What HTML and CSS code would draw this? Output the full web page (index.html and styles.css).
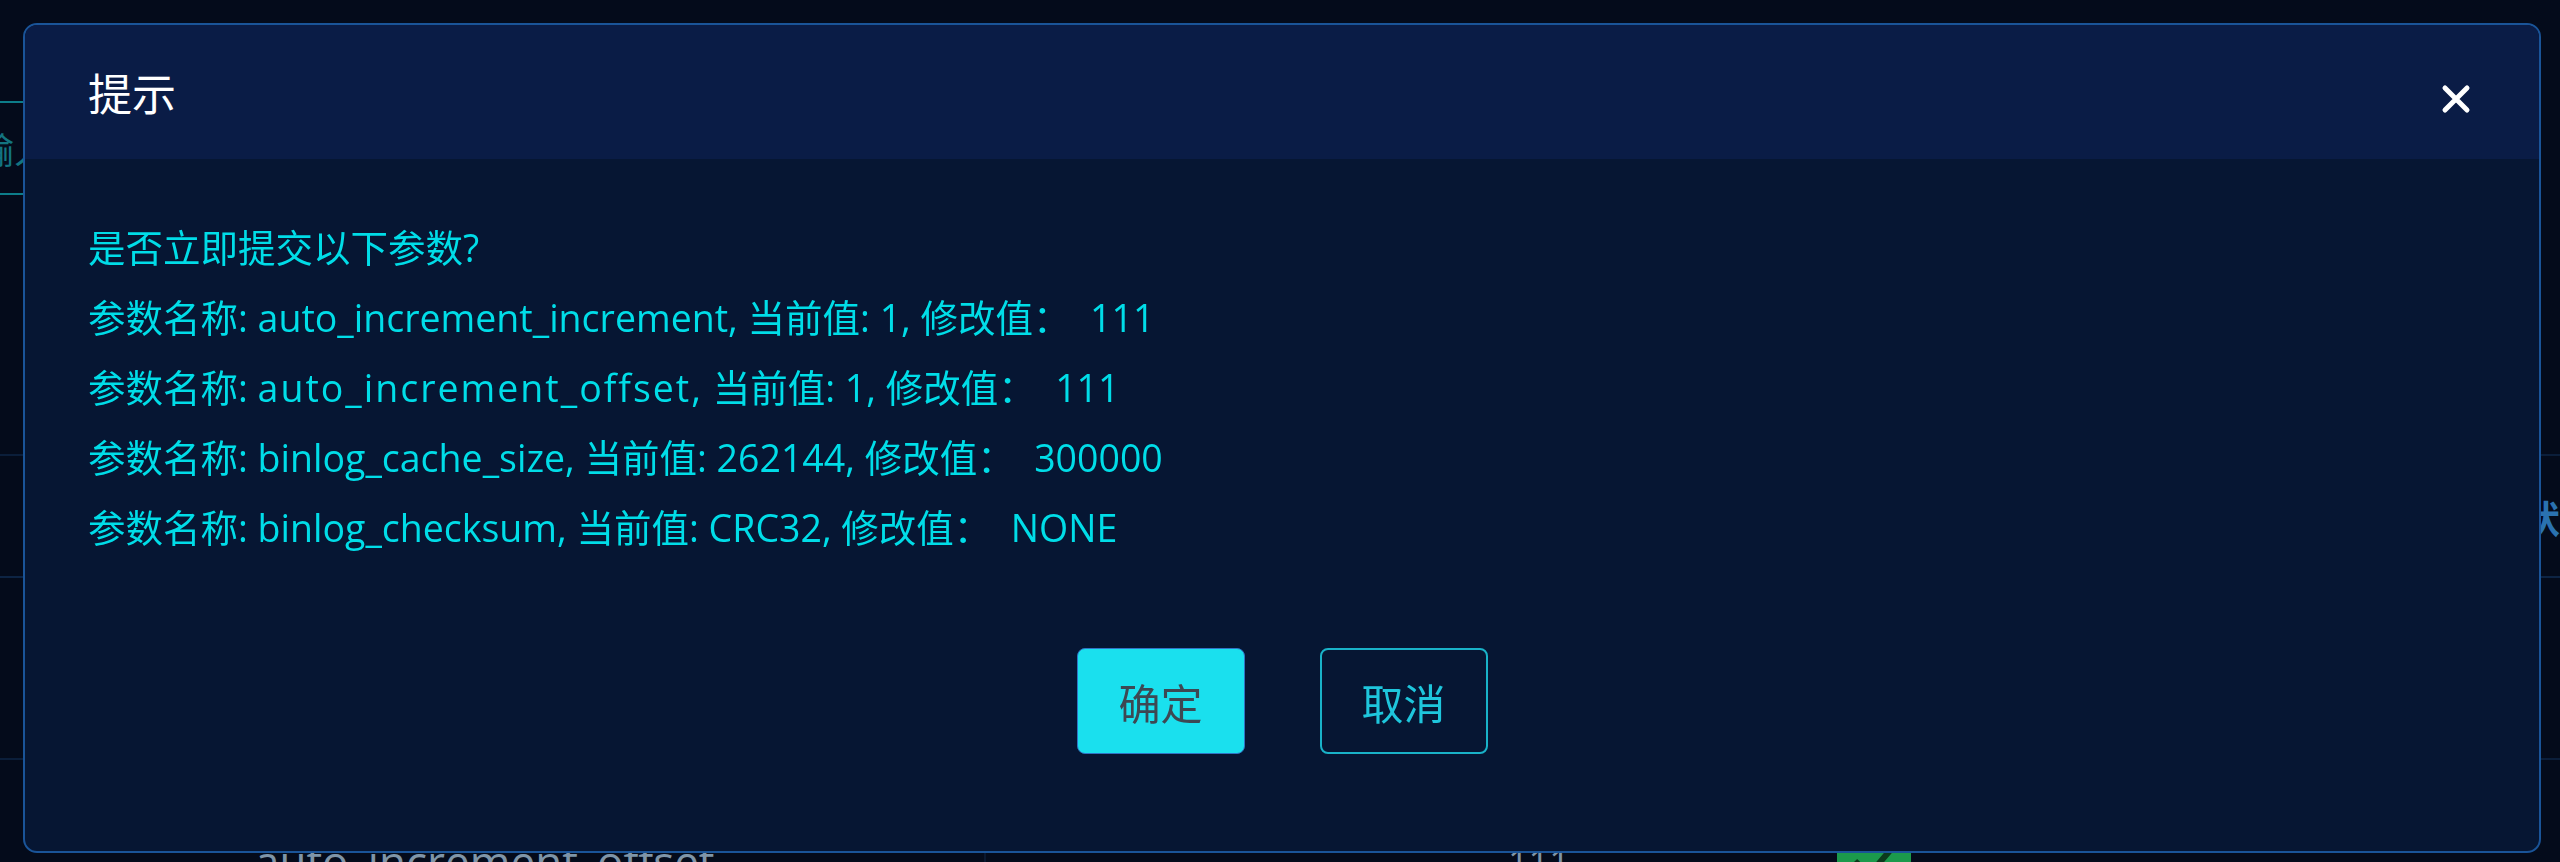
FILE: index.html
```html
<!DOCTYPE html>
<html lang="zh-CN">
<head>
<meta charset="utf-8">
<title>提示</title>
<link rel="stylesheet" href="styles.css">
</head>
<body>
<div class="page">
  <div class="toolbar">
    <div class="search">请输入参数名称</div>
  </div>
  <div class="table">
    <div class="row head">
      <div class="cell c1">参数名称</div>
      <div class="cell c2">当前值</div>
      <div class="cell c3">是否可修改</div>
      <div class="cell c4">状态</div>
    </div>
    <div class="row">
      <div class="cell c1 name">auto_increment_increment</div>
      <div class="cell c2">111</div>
      <div class="cell c3"></div>
      <div class="cell c4"></div>
    </div>
    <div class="row">
      <div class="cell c1 name">auto_increment_offset</div>
      <div class="cell c2 val">111</div>
      <div class="cell c3"><span class="ok"><svg viewBox="0 0 74 60" width="74" height="60"><path d="M18 30 L32 44 L56 16" fill="none" stroke="#0b3a1c" stroke-width="6"/></svg></span></div>
      <div class="cell c4"></div>
    </div>
  </div>
</div>

<div class="dialog">
  <div class="dialog-header">
    <span class="dialog-title">提示</span>
    <button class="close" aria-label="关闭"><svg viewBox="0 0 30 30" width="30" height="30"><path d="M4 4 L26 26 M26 4 L4 26" stroke="#ffffff" stroke-width="5" stroke-linecap="round"/></svg></button>
  </div>
  <div class="dialog-body">
    <p>是否立即提交以下参数?</p>
    <p>参数名称: auto_increment_increment, 当前值: 1, 修改值：&nbsp;&nbsp;111</p>
    <p>参数名称: <span class="param-wide">auto_increment_offset,</span> 当前值: 1, 修改值：&nbsp;&nbsp;111</p>
    <p>参数名称: binlog_cache_size, 当前值: 262144, 修改值：&nbsp;&nbsp;300000</p>
    <p>参数名称: binlog_checksum, 当前值: CRC32, 修改值：&nbsp;&nbsp;NONE</p>
  </div>
  <div class="dialog-footer">
    <button class="btn btn-primary">确定</button>
    <button class="btn btn-ghost">取消</button>
  </div>
</div>
</body>
</html>
```
FILE: styles.css
```css
* { box-sizing: border-box; }
html, body {
  margin: 0;
  padding: 0;
  width: 2560px;
  height: 862px;
  overflow: hidden;
  background: #040b1b;
  font-family: "Open Sans", "Noto Sans CJK SC", sans-serif;
}

/* background page (dimmed behind the dialog) */
.page {
  width: 2560px;
  height: 862px;
  overflow: hidden;
}
.toolbar {
  height: 454px;
  padding-top: 101px;
}
.search {
  width: 600px;
  height: 94px;
  margin-left: -560px;
  border: 2px solid #0d7d8a;
  border-radius: 6px;
  color: #137480;
  font-family: "Noto Sans CJK SC", sans-serif;
  font-size: 36px;
  line-height: 90px;
  padding-left: 500px;
  white-space: nowrap;
}
.table {
  border-top: 2px solid #0b1e3a;
}
.row {
  display: grid;
  grid-template-columns: 984px 716px 600px 260px;
  height: 182px;
  border-bottom: 2px solid #0b1e3a;
}
.row.head {
  height: 122px;
  border-bottom-color: #0d2444;
}
.cell {
  display: flex;
  align-items: center;
  font-size: 36px;
  color: #7f95a8;
  white-space: nowrap;
}
.head .cell {
  color: #2a72b0;
  font-weight: 700;
  font-size: 38px;
  font-family: "Noto Sans CJK SC", sans-serif;
}
.c1 { padding-left: 255px; }
.c2 { padding-left: 522px; border-left: 2px solid #0a1830; }
.c3 { padding-left: 137px; }
.c4 { padding-left: 222px; }
.row .name { font-size: 44px; }
.row .name, .row .val, .row .ok { margin-top: 22px; }
.ok {
  display: inline-flex;
  width: 74px;
  height: 60px;
  background: #1b9a4c;
  border-radius: 4px;
}

/* dialog */
.dialog {
  position: fixed;
  left: 23px;
  top: 23px;
  width: 2518px;
  height: 830px;
  border: 2px solid #1a5498;
  border-radius: 14px;
  background: #061633;
  overflow: hidden;
  display: flex;
  flex-direction: column;
}
.dialog-header {
  height: 134px;
  flex: none;
  background: #0a1c46;
  display: flex;
  align-items: center;
  justify-content: space-between;
  padding: 0 68px 0 63px;
}
.dialog-title {
  color: #ffffff;
  font-family: "Noto Sans CJK SC", sans-serif;
  font-size: 44px;
  line-height: 1;
}
.close {
  background: none;
  border: 0;
  padding: 0;
  margin-top: 14px;
  width: 30px;
  height: 30px;
  display: flex;
}
.dialog-body {
  padding: 54px 63px 0;
  color: #00dde8;
  font-size: 37.5px;
  line-height: 70px;
}
.dialog-body p { margin: 0; white-space: nowrap; }
.param-wide { letter-spacing: 2px; }
.dialog-footer {
  display: flex;
  justify-content: center;
  gap: 75px;
  margin-top: 85px;
}
.btn {
  width: 168px;
  height: 106px;
  border-radius: 8px;
  font-family: "Noto Sans CJK SC", sans-serif;
  font-size: 42px;
  padding: 0;
}
.btn-primary {
  background: #1ae0ee;
  border: 1px solid #2f74c4;
  color: #3d4853;
}
.btn-ghost {
  background: transparent;
  border: 2px solid #19b2c8;
  color: #1ec6dc;
}
```
